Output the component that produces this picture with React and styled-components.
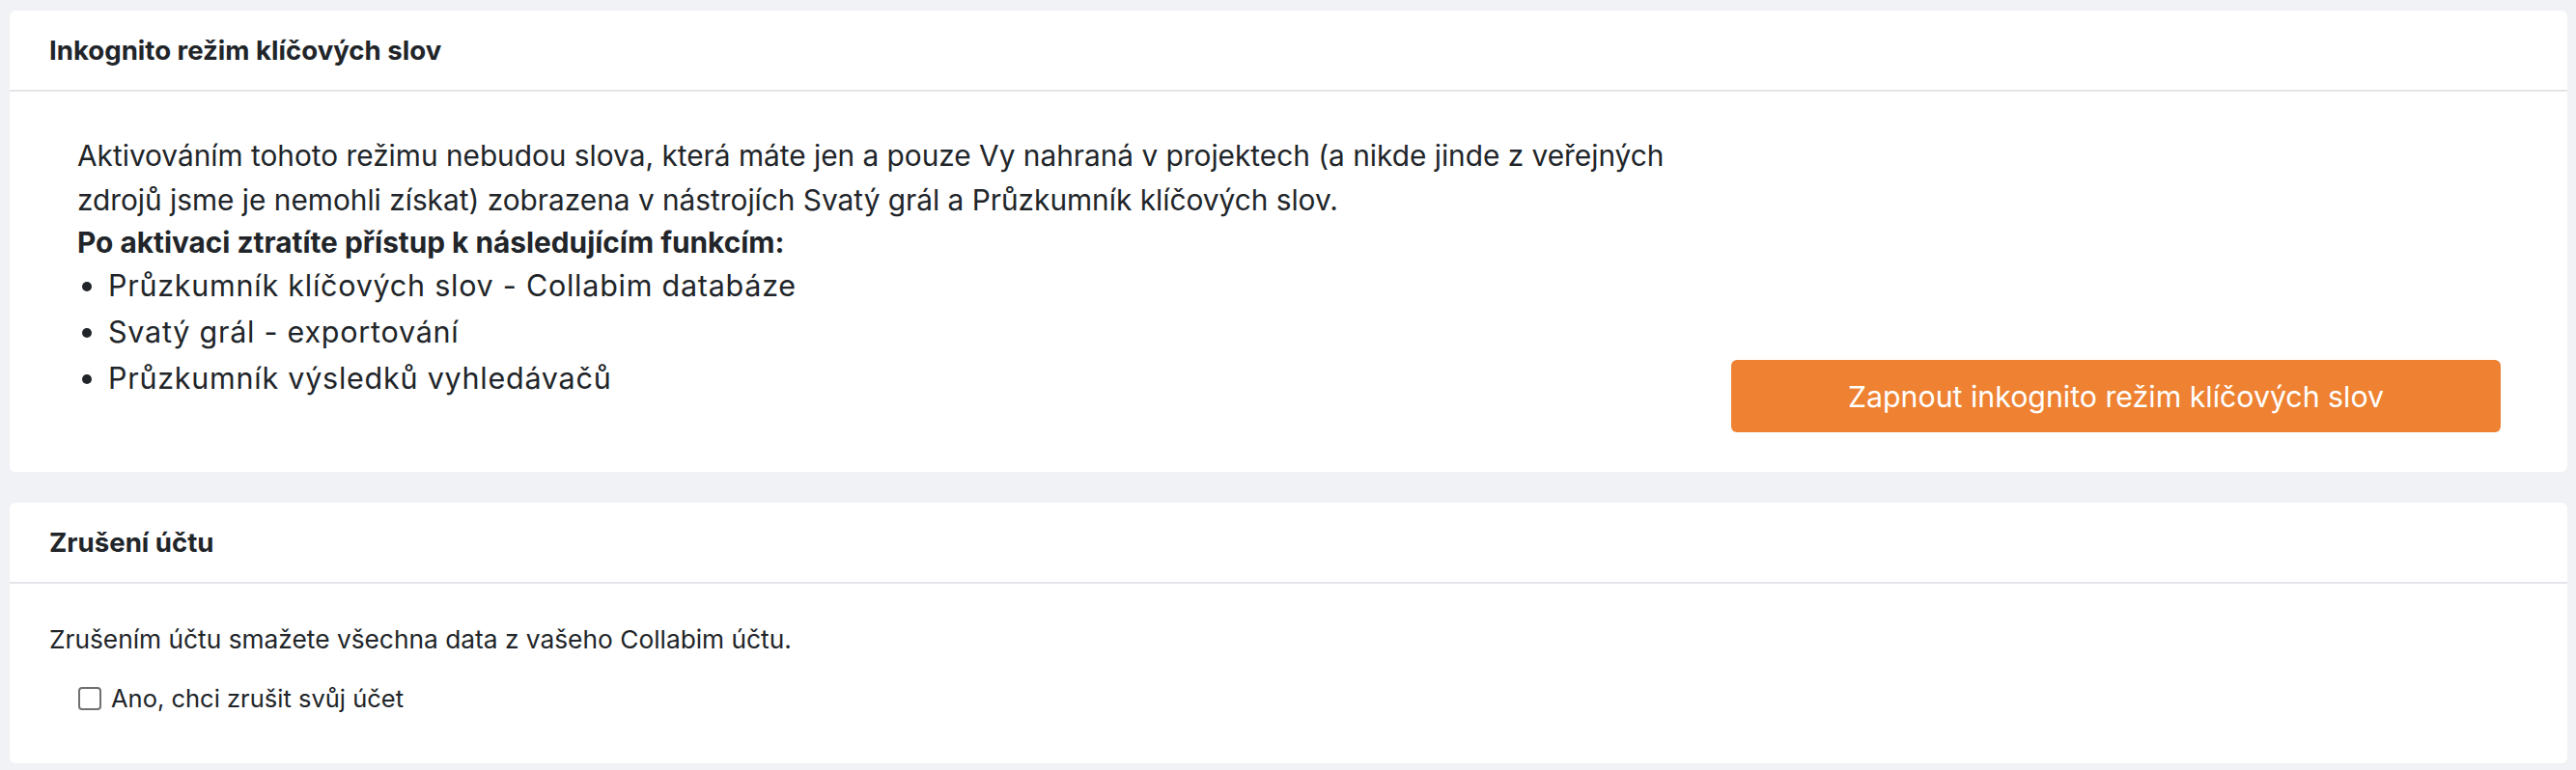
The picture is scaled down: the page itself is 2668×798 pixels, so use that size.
import styled, { createGlobalStyle } from 'styled-components';

const GlobalStyle = createGlobalStyle`
  html, body {
    margin: 0;
    padding: 0;
    background: #f0f2f5;
  }
  body {
    font-family: Inter, Roboto, "Liberation Sans", Arial, sans-serif;
    color: #212529;
  }
`;

const Page = styled.div`
  padding: 11px 9px 10px 10px;
  display: flex;
  flex-direction: column;
  gap: 32px;
`;

const Card = styled.section`
  background: #ffffff;
  border-radius: 6px;
`;

const CardHeader = styled.div`
  height: 82px;
  padding: 0 41px;
  display: flex;
  align-items: center;
  border-bottom: 2px solid #e4e5e9;
`;

const CardTitle = styled.h2`
  margin: 0;
  font-size: 27.6px;
  font-weight: 700;
  color: #212529;
`;

const CardBody = styled.div`
  padding: ${props => props.$compact ? '39px 41px 48px' : '43px 41px 41px'};
`;

const Row = styled.div`
  display: flex;
  align-items: flex-end;
  justify-content: space-between;
  padding: 0 28px 0 29px;
`;

const Info = styled.div`
  font-size: 29.8px;
  color: #212529;
  white-space: nowrap;
`;

const Lead = styled.p`
  margin: 0;
  line-height: 46px;
`;

const Strong = styled.div`
  font-weight: 700;
  line-height: 42px;
`;

const List = styled.ul`
  margin: 0 0 32px;
  padding-left: 32px;
`;

const Item = styled.li`
  font-size: 30.5px;
  letter-spacing: 0.75px;
  line-height: 48px;
`;

const PrimaryButton = styled.button`
  width: 797px;
  height: 75px;
  flex-shrink: 0;
  border: none;
  border-radius: 6px;
  background: #ee8232;
  color: #ffffff;
  font-family: Inter, Roboto, "Liberation Sans", Arial, sans-serif;
  font-size: 30.3px;
  font-weight: 400;
  cursor: pointer;
`;

const Text = styled.p`
  margin: 0;
  font-size: 26.3px;
  line-height: 38px;
`;

const CheckRow = styled.label`
  display: flex;
  align-items: center;
  gap: 10px;
  margin-top: 23px;
  padding-left: 30px;
  font-size: 25.5px;
  line-height: 38px;
`;

const Check = styled.input`
  appearance: none;
  width: 24px;
  height: 24px;
  margin: 0;
  border: 2px solid #707070;
  border-radius: 4px;
  background: #ffffff;
`;

const App = () => {
  return (
    <>
      <GlobalStyle />
      <Page>
        <Card>
          <CardHeader>
            <CardTitle>Inkognito režim klíčových slov</CardTitle>
          </CardHeader>
          <CardBody>
            <Row>
              <Info>
                <Lead>
                  Aktivováním tohoto režimu nebudou slova, která máte jen a pouze Vy nahraná v projektech (a nikde jinde z veřejných
                  <br />
                  zdrojů jsme je nemohli získat) zobrazena v nástrojích Svatý grál a Průzkumník klíčových slov.
                </Lead>
                <Strong>Po aktivaci ztratíte přístup k následujícím funkcím:</Strong>
                <List>
                  <Item>Průzkumník klíčových slov - Collabim databáze</Item>
                  <Item>Svatý grál - exportování</Item>
                  <Item>Průzkumník výsledků vyhledávačů</Item>
                </List>
              </Info>
              <PrimaryButton>Zapnout inkognito režim klíčových slov</PrimaryButton>
            </Row>
          </CardBody>
        </Card>
        <Card>
          <CardHeader>
            <CardTitle>Zrušení účtu</CardTitle>
          </CardHeader>
          <CardBody $compact>
            <Text>Zrušením účtu smažete všechna data z vašeho Collabim účtu.</Text>
            <CheckRow>
              <Check type="checkbox" />
              Ano, chci zrušit svůj účet
            </CheckRow>
          </CardBody>
        </Card>
      </Page>
    </>
  );
};

export default App;
